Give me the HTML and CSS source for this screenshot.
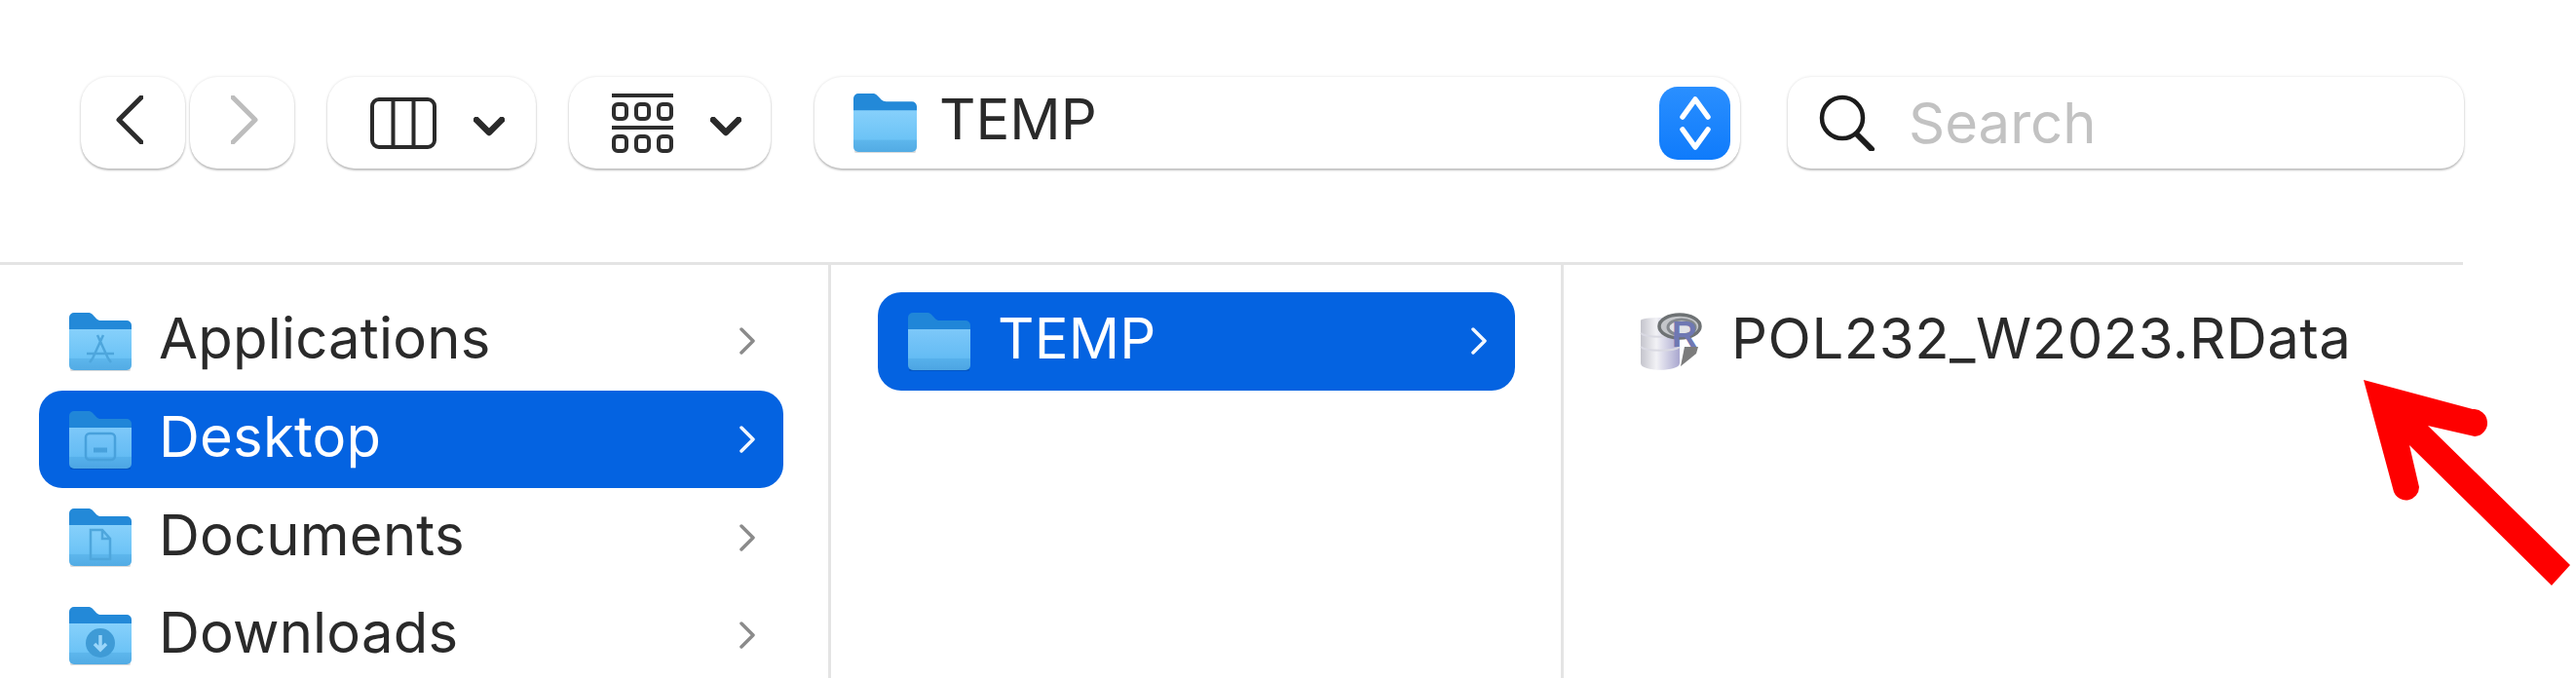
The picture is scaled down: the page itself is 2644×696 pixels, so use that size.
FILE: index.html
```html
<!DOCTYPE html>
<html lang="en">
<head>
<meta charset="utf-8">
<title>TEMP</title>
<link rel="stylesheet" href="styles.css">
</head>
<body>
<svg class="defs" width="0" height="0" aria-hidden="true">
  <defs>
    <linearGradient id="front" x1="0" y1="0" x2="0" y2="1">
      <stop offset="0" stop-color="#86d0fb"/>
      <stop offset="0.7" stop-color="#6cc3f6"/>
      <stop offset="0.72" stop-color="#5db6ec"/>
      <stop offset="1" stop-color="#52abe4"/>
    </linearGradient>
    <symbol id="folder" viewBox="0 0 64 61">
      <rect x="1" y="58" width="62" height="3" rx="1.5" fill="#000" opacity=".14"/>
      <path d="M0 6a5 5 0 0 1 5-5h14c4 0 5 2 7 4s3 4 7 4h26a5 5 0 0 1 5 5v12H0z" fill="#2389d8"/>
      <path d="M0 18h64v37a5 5 0 0 1-5 5H5a5 5 0 0 1-5-5z" fill="url(#front)"/>
    </symbol>
  </defs>
</svg>
<div class="window">
  <header class="toolbar">
    <div class="btn nav">
      <svg width="28" height="50" viewBox="0 0 28 50"><path class="s-dark" d="M26 2 3 25l23 23"/></svg>
    </div>
    <div class="btn nav next">
      <svg width="28" height="50" viewBox="0 0 28 50"><path class="s-faint" d="m2 2 23 23L2 48"/></svg>
    </div>
    <div class="btn view">
      <svg width="68" height="53" viewBox="0 0 68 53"><rect class="s-icon" x="2" y="2" width="64" height="49" rx="7"/><path class="s-icon" d="M23.500 2v49M44.500 2v49"/></svg>
      <svg class="caret" width="32" height="20" viewBox="0 0 32 20"><path class="s-caret" d="m3 3 13 13L29 3"/></svg>
    </div>
    <div class="btn group">
      <svg width="63" height="61" viewBox="0 0 63 61">
        <path class="s-thin" d="M0 2h63M0 35h63"/>
        <rect class="s-thin" x="2" y="11" width="13" height="15" rx="4"/><rect class="s-thin" x="25" y="11" width="13" height="15" rx="4"/><rect class="s-thin" x="48" y="11" width="13" height="15" rx="4"/>
        <rect class="s-thin" x="2" y="44" width="13" height="15" rx="4"/><rect class="s-thin" x="25" y="44" width="13" height="15" rx="4"/><rect class="s-thin" x="48" y="44" width="13" height="15" rx="4"/>
      </svg>
      <svg class="caret" width="32" height="20" viewBox="0 0 32 20"><path class="s-caret" d="m3 3 13 13L29 3"/></svg>
    </div>
    <div class="btn path">
      <svg class="folder-sm" width="65" height="62"><use href="#folder"/></svg>
      <span class="path-name">TEMP</span>
      <span class="stepper">
        <svg width="34" height="56" viewBox="0 0 34 56"><path class="s-step" d="M4 22 17 4l13 18M4 35l13 18 13-18"/></svg>
      </span>
    </div>
    <div class="btn search">
      <svg width="58" height="58" viewBox="0 0 58 58"><circle class="s-search" cx="24" cy="24" r="21"/><path class="s-handle" d="m39 41 15 15"/></svg>
      <span class="search-text">Search</span>
    </div>
  </header>
  <main class="panes">
    <section class="pane pane-one">
      <div class="row">
        <span class="fold"><svg width="64" height="61"><use href="#folder"/></svg>
          <svg class="glyph" width="34" height="34" viewBox="0 0 34 34"><path d="M20 3 9 27M14 3l11 24M3 22h28M6 31l3-4M28 31l-3-4" /></svg></span>
        <span class="label">Applications</span>
        <svg class="more" width="16" height="28" viewBox="0 0 16 28"><path d="m2 2 12 12L2 26"/></svg>
      </div>
      <div class="row selected">
        <span class="fold"><svg width="64" height="61"><use href="#folder"/></svg>
          <svg class="glyph" width="34" height="34" viewBox="0 0 34 34"><rect x="2" y="3" width="30" height="27" rx="4"/><path d="M10 20h14" stroke-width="5"/></svg></span>
        <span class="label">Desktop</span>
        <svg class="more" width="16" height="28" viewBox="0 0 16 28"><path d="m2 2 12 12L2 26"/></svg>
      </div>
      <div class="row">
        <span class="fold"><svg width="64" height="61"><use href="#folder"/></svg>
          <svg class="glyph" width="34" height="34" viewBox="0 0 34 34"><path d="M7 2h12l8 9v21H7zM19 2v9h8"/></svg></span>
        <span class="label">Documents</span>
        <svg class="more" width="16" height="28" viewBox="0 0 16 28"><path d="m2 2 12 12L2 26"/></svg>
      </div>
      <div class="row">
        <span class="fold"><svg width="64" height="61"><use href="#folder"/></svg>
          <svg class="glyph" width="34" height="34" viewBox="0 0 34 34"><circle class="disc" cx="17" cy="17" r="15"/><path class="arrow-down" d="M17 9v15M11 18l6 6 6-6"/></svg></span>
        <span class="label">Downloads</span>
        <svg class="more" width="16" height="28" viewBox="0 0 16 28"><path d="m2 2 12 12L2 26"/></svg>
      </div>
    </section>
    <section class="pane pane-two">
      <div class="row selected">
        <span class="fold"><svg width="64" height="61"><use href="#folder"/></svg></span>
        <span class="label">TEMP</span>
        <svg class="more" width="16" height="28" viewBox="0 0 16 28"><path d="m2 2 12 12L2 26"/></svg>
      </div>
    </section>
    <section class="pane pane-three">
      <div class="file">
        <svg class="rdata" width="65" height="61" viewBox="0 0 65 61">
          <defs>
            <linearGradient id="disk" x1="0" y1="0" x2="1" y2="0">
              <stop offset="0" stop-color="#c4c4cc"/><stop offset=".4" stop-color="#f2f2f6"/><stop offset="1" stop-color="#a9a7cf"/>
            </linearGradient>
          </defs>
          <path d="M1 9c0-4 40-4 40 0v44c0 9-40 9-40 0z" fill="url(#disk)"/>
          <path d="M1 22c5 5 35 5 40 0M1 36c5 5 35 5 40 0" class="r-band"/>
          <path d="M42 56 46 36h14l-2 7z" fill="#444" opacity=".7"/>
          <ellipse cx="41" cy="15" rx="21" ry="12" class="r-ring"/>
          <ellipse cx="43" cy="16" rx="14" ry="8" class="r-ring-in"/>
          <text x="33" y="36" class="r-letter">R</text>
        </svg>
        <span class="label file-name">POL232_W2023.RData</span>
      </div>
    </section>
  </main>
</div>
<svg class="pointer" width="2644" height="696" viewBox="0 0 2644 696" aria-hidden="true">
  <path d="M2426 390 2538 420a14 14 0 0 1 2 28l-48-11 146 143-19 21-146-144 10 43a13.500 13.500 0 0 1-26 5z" fill="#fe0000"/>
</svg>
</body>
</html>
```

FILE: styles.css
```css
html, body {
  margin: 0;
  height: 696px;
  overflow: hidden;
  background: #fff;
}
body {
  font-family: Inter, "Liberation Sans", sans-serif;
  color: #2a2a2a;
}
.defs { position: absolute; }

.window { width: 2528px; height: 696px; display: flex; flex-direction: column; }

.toolbar {
  box-sizing: border-box;
  height: 272px;
  padding: 79px 0 0 83px;
  display: flex;
  align-items: flex-start;
  border-bottom: 3px solid #e4e4e4;
}
.btn {
  box-sizing: border-box;
  height: 94px;
  background: #fff;
  border-radius: 28px;
  box-shadow: 0 2px 2px rgba(0,0,0,.22), 0 0 3px rgba(0,0,0,.13);
  display: flex;
  align-items: center;
  flex: none;
}
.nav { width: 107px; justify-content: center; }
.next { margin-left: 5px; margin-right: 34px; }
.nav svg { margin-right: 7px; margin-bottom: 6px; }
.next svg { margin-right: 0; margin-left: 4px; }
.view { width: 214px; padding-left: 44px; margin-right: 34px; }
.view .caret { margin-left: 38px; margin-top: 8px; }
.group { width: 207px; padding-left: 44px; margin-right: 45px; }
.group .caret { margin-left: 38px; margin-top: 8px; }
.path { width: 950px; padding-left: 40px; padding-right: 10px; margin-right: 49px; }
.folder-sm { margin-right: 23px; }
.path-name { font-size: 58px; flex: 1; margin-bottom: 8px; }
.stepper {
  width: 73px;
  height: 75px;
  border-radius: 19px;
  background: linear-gradient(#2a8fff, #0f7bfb);
  display: flex;
  align-items: center;
  justify-content: center;
}
.search { width: 694px; padding-left: 32px; border-radius: 24px; }
.search-text { font-size: 58px; color: #c2c2c2; margin-left: 34px; }

.s-dark, .s-faint, .s-icon, .s-caret, .s-thin, .s-step, .s-search, .s-handle {
  fill: none;
  stroke-linecap: round;
  stroke-linejoin: round;
}
.s-dark { stroke: #2c2c2c; stroke-width: 5; }
.s-faint { stroke: #bdbdbd; stroke-width: 5; }
.s-icon { stroke: #2a2a2a; stroke-width: 4; }
.s-caret { stroke: #2a2a2a; stroke-width: 6.500; }
.s-thin { stroke: #2e2e2e; stroke-width: 4; stroke-linecap: butt; }
.s-step { stroke: #fff; stroke-width: 5.500; }
.s-search { stroke: #1c1c1c; stroke-width: 4.500; }
.s-handle { stroke: #1c1c1c; stroke-width: 6; }

.panes { flex: 1; display: flex; min-height: 0; overflow: hidden; }
.pane { box-sizing: border-box; padding-top: 28px; }
.pane-one { width: 853px; padding-left: 40px; padding-right: 46px; border-right: 3px solid #e4e4e4; }
.pane-two { width: 752px; padding-left: 48px; padding-right: 47px; border-right: 3px solid #e4e4e4; }
.pane-three { flex: 1; padding-left: 78px; }

.row {
  height: 100.700px;
  padding: 0 29px 0 31px;
  display: flex;
  align-items: center;
  border-radius: 24px;
  box-sizing: border-box;
}
.fold { position: relative; width: 64px; height: 61px; margin-right: 28px; flex: none; display: block; }
.fold > svg:first-child { display: block; }
.glyph {
  position: absolute;
  left: 15px;
  top: 21px;
  fill: none;
  stroke: #4ea6dc;
  stroke-width: 2.500;
}
.glyph .disc { fill: #3f9bd6; stroke: none; }
.glyph .arrow-down { stroke: #9ad6fa; stroke-width: 3.500; }
.label { font-size: 58px; flex: 1; white-space: nowrap; margin-bottom: 6px; letter-spacing: .2px; }
.file-name { letter-spacing: .55px; }
.more { fill: none; stroke: #8b8b8b; stroke-width: 3.500; stroke-linecap: round; stroke-linejoin: round; flex: none; }
.selected { background: #0463e1; color: #fff; }
.selected .more { stroke: #f2f7ff; }
.selected .fold { opacity: .93; }

.file { height: 100.700px; display: flex; align-items: center; }
.rdata { margin-right: 29px; flex: none; }
.r-band { fill: none; stroke: #d9d9e2; stroke-width: 2; }
.r-ring { fill: #c4c6ca; stroke: #6e7274; stroke-width: 3.500; }
.r-ring-in { fill: #e2e3e8; stroke: #85898e; stroke-width: 3; }
.r-letter { font-family: "Liberation Sans", sans-serif; font-size: 36px; font-weight: 700; fill: #6f78b3; }

.pointer { position: absolute; left: 0; top: 0; }
```
